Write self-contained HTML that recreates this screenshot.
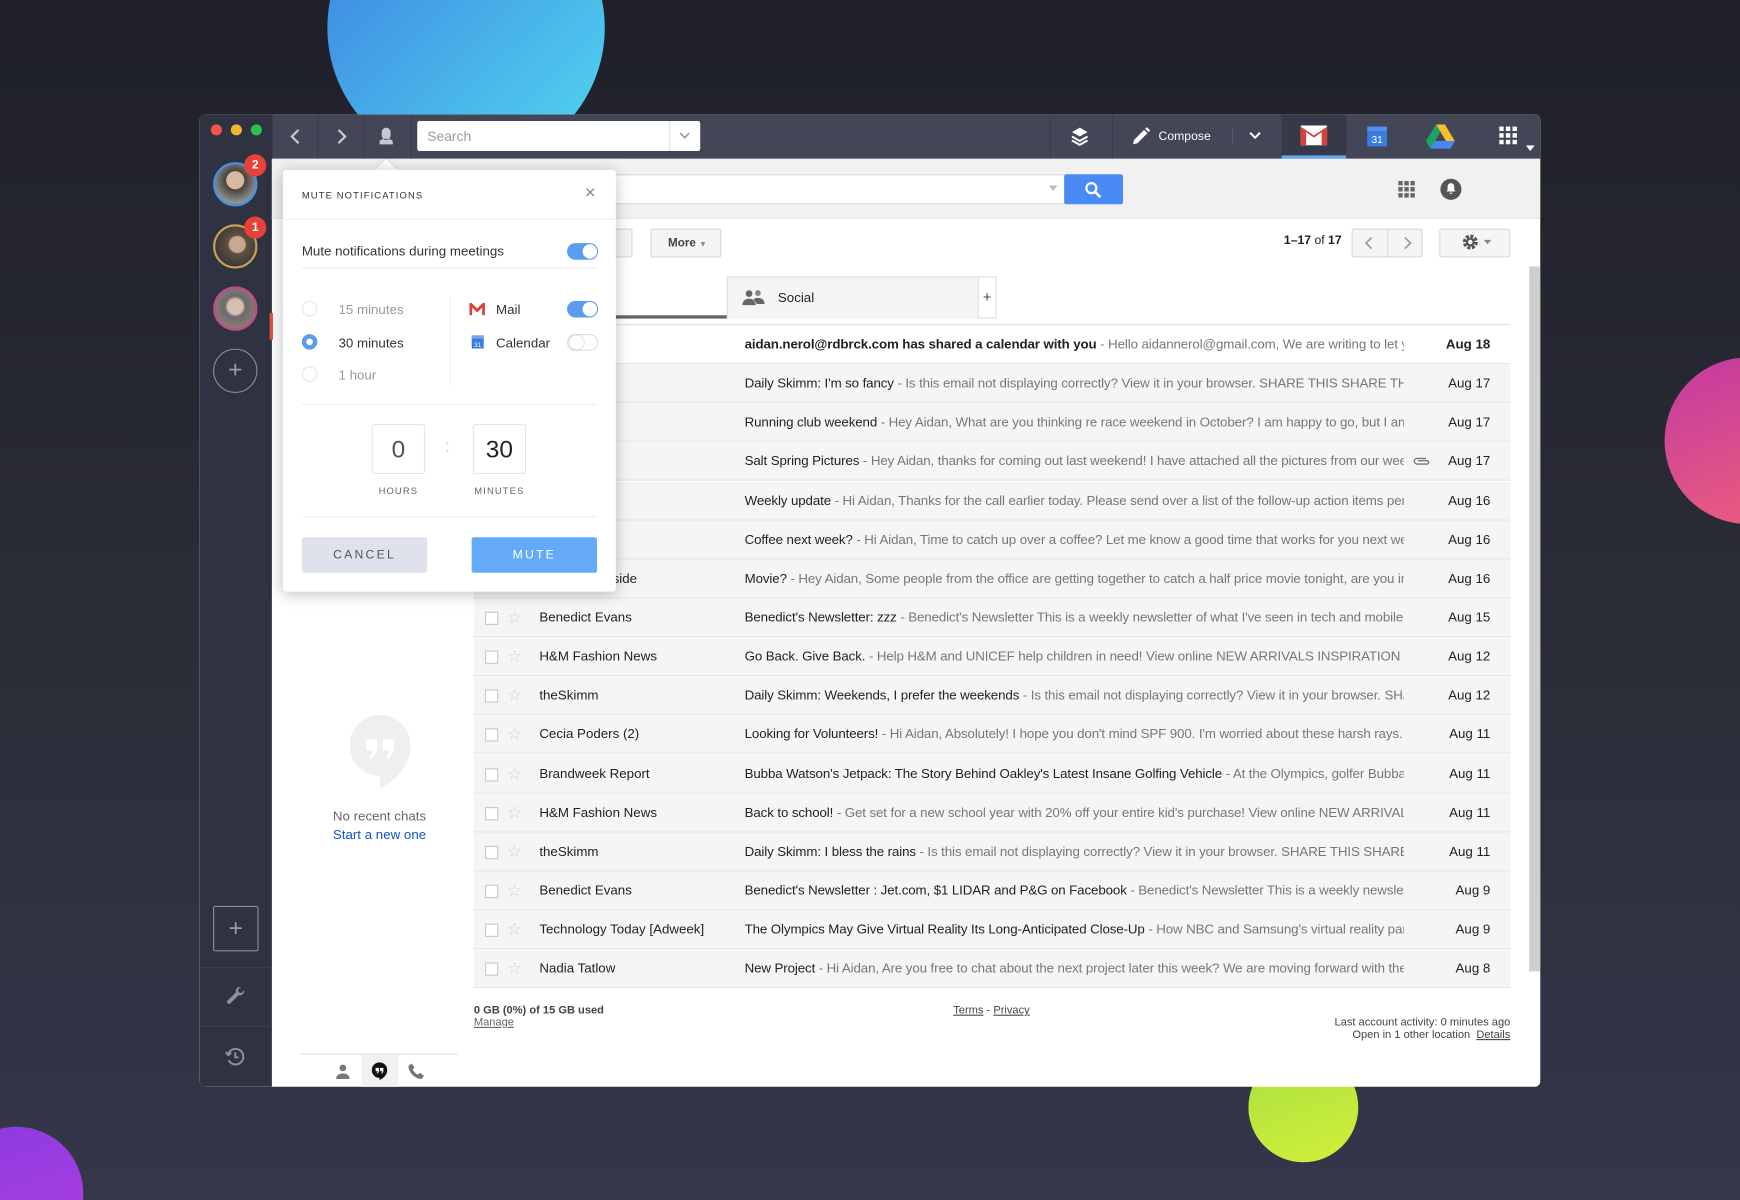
<!DOCTYPE html>
<html><head><meta charset="utf-8">
<style>
*{box-sizing:border-box;margin:0;padding:0}
html,body{width:1740px;height:1200px;overflow:hidden;background:#262833}
#s{position:absolute;left:0;top:0;width:1568px;height:1081px;transform:scale(1.1097,1.1101);transform-origin:0 0;font-family:"Liberation Sans",Arial,sans-serif;background:linear-gradient(180deg,#1f2029 0%,#2c2e3a 60%,#34374a 100%);overflow:hidden}
.a{position:absolute}
.circ{position:absolute;border-radius:50%}
.win{left:180px;top:103px;width:1208px;height:876px;background:#fff;border-radius:5px;overflow:hidden}
.tb{left:0;top:0;width:1208px;height:40px;background:#434656}
.side{left:0;top:0;width:65px;height:876px;background:#2f3240}
.sep{position:absolute;width:1px;background:#3a3d4c}
.row{position:absolute;left:427px;width:934px;height:35px;border-bottom:1px solid #e5e5e5;background:#f5f5f5;font-size:12px;color:#222}
.row .cb{position:absolute;left:10px;top:12px;width:12px;height:12px;border:1px solid #c8c8c8;background:#fff}
.row .st{position:absolute;left:30px;top:8px;color:#cfcfcf;font-size:15px}
.row .sn{position:absolute;left:59px;top:10px;white-space:nowrap}
.row .sb{position:absolute;left:244px;top:10px;width:594px;overflow:hidden;white-space:nowrap;letter-spacing:-0.1px}
.row .sb span{color:#777}
.row .dt{position:absolute;right:0;top:10px;width:80px;text-align:right;padding-right:18px}
.pop{left:255px;top:153px;width:300px;height:380px;background:#fff;border-radius:3px;box-shadow:0 2px 14px rgba(0,0,0,.25);font-family:"Liberation Sans",sans-serif}
.hr{position:absolute;height:1px;background:#eceef2}
.tog{position:absolute;width:28px;height:15px;border-radius:8px;background:#5b9cf0}
.tog:after{content:"";position:absolute;right:1px;top:1px;width:13px;height:13px;border-radius:50%;background:#fff}
.tog.off{background:#fff;border:1px solid #dcdde2}
.tog.off:after{left:1px;top:0;box-shadow:0 0 2px rgba(0,0,0,.3)}
.rad{position:absolute;left:17px;width:14px;height:14px;border-radius:50%;border:1px solid #e2e4ea}
.btn{position:absolute;height:26px;border:1px solid #d8d8d8;background:#f5f5f5;border-radius:2px;font-size:10.5px;font-weight:bold;color:#444;white-space:nowrap}
</style></head><body><div id="s">
<div class="circ" style="left:295px;top:-100px;width:250px;height:250px;background:linear-gradient(135deg,#3b7fe0,#52d8f0)"></div>
<div class="circ" style="left:1500px;top:322px;width:150px;height:150px;background:linear-gradient(160deg,#c23aa0,#f0607a)"></div>
<div class="circ" style="left:1125px;top:948px;width:99px;height:99px;background:linear-gradient(160deg,#a8e040,#d2f03a)"></div>
<div class="circ" style="left:-45px;top:1015px;width:120px;height:120px;background:linear-gradient(160deg,#8a3ae0,#b040e0)"></div>

<div class="a win">
 <div class="a tb"></div>
 <div class="a side"></div>
 <div class="circ" style="left:10px;top:9px;width:10px;height:10px;background:#f2544e"></div>
 <div class="circ" style="left:28px;top:9px;width:10px;height:10px;background:#f4b52a"></div>
 <div class="circ" style="left:46px;top:9px;width:10px;height:10px;background:#2cc14a"></div>
 <div class="circ" style="left:12px;top:43px;width:40px;height:40px;border:2px solid #4a90e2;background:radial-gradient(circle at 50% 40%,#d8b8a0 0 28%,#4a4038 30%,#8a9090 70%)"></div>
 <div class="circ" style="left:40px;top:36px;width:20px;height:20px;background:#e8413a;color:#fff;font-size:11px;font-weight:bold;text-align:center;line-height:20px">2</div>
 <div class="circ" style="left:12px;top:99px;width:40px;height:40px;border:2px solid #c9a050;background:radial-gradient(circle at 55% 45%,#c8a890 0 25%,#605040 30%,#3a3a3a 70%)"></div>
 <div class="circ" style="left:40px;top:92px;width:20px;height:20px;background:#e8413a;color:#fff;font-size:11px;font-weight:bold;text-align:center;line-height:20px">1</div>
 <div class="circ" style="left:12px;top:155px;width:40px;height:40px;border:2px solid #c04a90;background:radial-gradient(circle at 50% 45%,#d8c0b0 0 25%,#6a6a70 35%,#8a7a70 70%)"></div>
 <div class="a" style="left:63px;top:179px;width:3px;height:24px;background:#e8513a"></div>
 <div class="circ" style="left:12px;top:211px;width:40px;height:40px;border:1.5px solid #8a8d9a;color:#9a9da8;font-size:22px;text-align:center;line-height:36px;font-weight:300">+</div>
 <div class="a" style="left:12px;top:713px;width:41px;height:41px;border:1.5px solid #8a8d9a;border-radius:2px;color:#9a9da8;font-size:22px;text-align:center;line-height:38px">+</div>
 <div class="a" style="left:0;top:768px;width:65px;height:1px;background:#3b3e4d"></div>
 <div class="a" style="left:0;top:821px;width:65px;height:1px;background:#3b3e4d"></div>
 <svg class="a" style="left:22px;top:784px" width="20" height="20" viewBox="0 0 20 20"><path d="M15 2a4 4 0 0 0-4.5 5L3 14.5a1.8 1.8 0 0 0 2.5 2.5L13 9.5A4 4 0 0 0 18 5l-2.5 2.5L13 7l-.5-2.5z" fill="#8e919c"/></svg>
 <svg class="a" style="left:22px;top:839px" width="20" height="20" viewBox="0 0 20 20" fill="none" stroke="#8e919c" stroke-width="1.8"><path d="M3.5 8A7 7 0 1 1 4 13"/><path d="M1.5 5.5 3.5 8.5 6.5 6.5"/><path d="M10 6v4.5h3"/></svg>

 <div class="sep" style="left:65px;top:0;height:40px;background:#3a3d4c"></div>
 <div class="sep" style="left:106px;top:0;height:40px"></div>
 <div class="sep" style="left:148px;top:0;height:40px"></div>
 <div class="sep" style="left:190px;top:0;height:40px"></div>
 <svg class="a" style="left:80px;top:12px" width="12" height="16"><path d="M9 2 3 8l6 6" stroke="#c5c8d2" stroke-width="2" fill="none"/></svg>
 <svg class="a" style="left:122px;top:12px" width="12" height="16"><path d="M3 2l6 6-6 6" stroke="#c5c8d2" stroke-width="2" fill="none"/></svg>
 <svg class="a" style="left:161px;top:11px" width="14" height="17" viewBox="0 0 14 17"><path d="M7 1a4 4 0 0 0-4 4v3a4 4 0 0 0 8 0V5a4 4 0 0 0-4-4zM1 14c0-2 3-3 6-3s6 1 6 3v2H1z" fill="#c5c8d2"/></svg>
 <div class="a" style="left:196px;top:6px;width:255px;height:27px;background:#fff;border-radius:2px;font-size:12.5px;color:#9a9a9a;padding:7px 9px">Search</div>
 <div class="a" style="left:423px;top:6px;width:1px;height:27px;background:#e5e5e5"></div>
 <svg class="a" style="left:431px;top:14px" width="12" height="10"><path d="M2 3l4 4 4-4" stroke="#999" stroke-width="1.5" fill="none"/></svg>

 <div class="sep" style="left:766px;top:0;height:40px"></div>
 <div class="sep" style="left:822px;top:0;height:40px"></div>
 <div class="sep" style="left:975px;top:0;height:40px"></div>
 <svg class="a" style="left:784px;top:11px" width="18" height="18" viewBox="0 0 18 18"><path d="M9 1 2 5l7 4 7-4z" fill="#fff"/><path d="M2 9l7 4 7-4M2 12.5l7 4 7-4" stroke="#fff" stroke-width="1.8" fill="none"/></svg>
 <svg class="a" style="left:839px;top:11px" width="18" height="18" viewBox="0 0 18 18"><path d="M2 16l1-4L12 3l3 3-9 9z M13 2l1.5-1.5 3 3L16 5z" fill="#fff"/></svg>
 <div class="a" style="left:864px;top:14px;color:#fff;font-size:11px">Compose</div>
 <div class="sep" style="left:930px;top:12px;height:16px;background:#555868"></div>
 <svg class="a" style="left:945px;top:14px" width="12" height="10"><path d="M1.5 2.5 6 7l4.5-4.5" stroke="#fff" stroke-width="1.8" fill="none"/></svg>
 <div class="a" style="left:975px;top:0;width:58px;height:40px;background:#363947"></div>
 <div class="a" style="left:975px;top:37px;width:58px;height:3px;background:#64a8f4"></div>
 <svg class="a" style="left:992px;top:10px" width="24" height="18" viewBox="0 0 24 18"><rect x="0" y="0" width="24" height="18" rx="1" fill="#fff"/><path d="M0 1v17h5V6l7 5 7-5v12h5V1L12 9z" fill="#d8403a"/></svg>
 <svg class="a" style="left:1052px;top:9px" width="18" height="20" viewBox="0 0 18 20"><rect x="0" y="2" width="18" height="18" fill="#3b7ce0"/><rect x="0" y="2" width="18" height="4" fill="#5590e8"/><text x="9" y="17" font-size="9" fill="#fff" text-anchor="middle" font-family="Liberation Sans">31</text></svg>
 <svg class="a" style="left:1105px;top:9px" width="26" height="22" viewBox="0 0 26 22"><path d="M9 0h8l9 15h-8z" fill="#f6c02c"/><path d="M9 0 0 15l4 7 9-15z" fill="#1ea362"/><path d="M4 22h18l4-7H8z" fill="#4688f4"/></svg>
 <svg class="a" style="left:1171px;top:11px" width="16" height="16"><g fill="#fff"><rect x="0" y="0" width="4" height="4"/><rect x="6" y="0" width="4" height="4"/><rect x="12" y="0" width="4" height="4"/><rect x="0" y="6" width="4" height="4"/><rect x="6" y="6" width="4" height="4"/><rect x="12" y="6" width="4" height="4"/><rect x="0" y="12" width="4" height="4"/><rect x="6" y="12" width="4" height="4"/><rect x="12" y="12" width="4" height="4"/></g></svg>
 <svg class="a" style="left:1195px;top:28px" width="8" height="6"><path d="M0 0h8L4 5z" fill="#fff"/></svg>

 <div class="a" style="left:65px;top:40px;width:1143px;height:54px;background:#f1f1f1;border-bottom:1px solid #e2e2e2"></div>
 <div class="a" style="left:300px;top:54px;width:480px;height:27px;background:#fff;border:1px solid #d9d9d9"></div>
 <svg class="a" style="left:765px;top:64px" width="8" height="6"><path d="M0 0h8L4 5z" fill="#bbb"/></svg>
 <div class="a" style="left:779px;top:54px;width:53px;height:27px;background:#4a8af4;border-radius:2px"></div>
 <svg class="a" style="left:797px;top:60px" width="16" height="16" viewBox="0 0 16 16"><circle cx="6.5" cy="6.5" r="4.5" stroke="#fff" stroke-width="2" fill="none"/><path d="M10 10l4.5 4.5" stroke="#fff" stroke-width="2.4"/></svg>
 <svg class="a" style="left:1080px;top:60px" width="15" height="15"><g fill="#666"><rect x="0" y="0" width="4" height="4"/><rect x="5.5" y="0" width="4" height="4"/><rect x="11" y="0" width="4" height="4"/><rect x="0" y="5.5" width="4" height="4"/><rect x="5.5" y="5.5" width="4" height="4"/><rect x="11" y="5.5" width="4" height="4"/><rect x="0" y="11" width="4" height="4"/><rect x="5.5" y="11" width="4" height="4"/><rect x="11" y="11" width="4" height="4"/></g></svg>
 <div class="circ" style="left:1118px;top:58px;width:19px;height:19px;background:#555"></div>
 <svg class="a" style="left:1122px;top:61px" width="11" height="12" viewBox="0 0 11 12"><path d="M5.5 1A3 3 0 0 0 2.5 4v3L1.5 8.5h8L8.5 7V4a3 3 0 0 0-3-3zM4.3 9.5h2.4a1.2 1.2 0 0 1-2.4 0z" fill="#fff"/></svg>

 <div class="btn" style="left:350px;top:103px;width:40px"></div>
 <div class="btn" style="left:406px;top:103px;width:64px;padding:6px 15px">More <span style="font-size:7px;color:#888">▼</span></div>
 <div class="a" style="left:977px;top:108px;font-size:11px;font-weight:bold;color:#222">1–17 <span style="font-weight:normal">of</span> 17</div>
 <div class="btn" style="left:1038px;top:103px;width:64px"></div>
 <div class="a" style="left:1070px;top:103px;width:1px;height:26px;background:#ddd"></div>
 <svg class="a" style="left:1049px;top:109px" width="10" height="14"><path d="M7 2 2 7l5 5" stroke="#999" stroke-width="1.5" fill="none"/></svg>
 <svg class="a" style="left:1083px;top:109px" width="10" height="14"><path d="M3 2l5 5-5 5" stroke="#999" stroke-width="1.5" fill="none"/></svg>
 <div class="btn" style="left:1117px;top:103px;width:64px"></div>
 <svg class="a" style="left:1136px;top:106px" width="18" height="18" viewBox="0 0 18 18"><circle cx="9" cy="9" r="5" stroke="#555" stroke-width="3.5" fill="none" stroke-dasharray="2.6 1.3"/><circle cx="9" cy="9" r="4" fill="#555"/><circle cx="9" cy="9" r="2" fill="#f5f5f5"/></svg>
 <svg class="a" style="left:1157px;top:113px" width="7" height="5"><path d="M0 0h7L3.5 4z" fill="#888"/></svg>
 <div class="a" style="left:1198px;top:137px;width:10px;height:635px;background:#cfcfcf"></div>
</div>

<div class="a" style="left:427px;top:248px;width:228px;height:39px;border-bottom:3px solid #666;background:#fff"></div>
<div class="a" style="left:655px;top:249px;width:227px;height:38px;background:#f5f5f5;border:1px solid #ddd;border-bottom:none"></div>
<svg class="a" style="left:669px;top:261px" width="20" height="14" viewBox="0 0 20 14"><circle cx="6" cy="3.5" r="3" fill="#666"/><circle cx="14" cy="3" r="2.6" fill="#888"/><path d="M0 14c0-4 3-6 6-6s6 2 6 6zM10 8.5c1-1 2.5-1.2 4-1.2 3 0 6 1.5 6 5.5h-7z" fill="#666"/></svg>
<div class="a" style="left:701px;top:261px;font-size:12px;color:#222">Social</div>
<div class="a" style="left:882px;top:249px;width:16px;height:38px;border:1px solid #ddd;border-left:none;font-size:13px;text-align:center;line-height:36px;color:#444">+</div>
<div class="a" style="left:427px;top:292px;width:934px;height:1px;background:#ddd"></div>

<div class="row" style="top:293px;background:#fff;font-weight:bold"><div class="cb"></div><div class="st">☆</div><div class="sn">Google</div><div class="sb">aidan.nerol@rdbrck.com has shared a calendar with you <span style="font-weight:normal">- Hello aidannerol@gmail.com, We are writing to let you know</span></div><div class="dt">Aug 18</div></div>
<div class="row" style="top:328px"><div class="cb"></div><div class="st">☆</div><div class="sn">theSkimm</div><div class="sb">Daily Skimm: I'm so fancy <span>- Is this email not displaying correctly? View it in your browser. SHARE THIS SHARE THIS</span></div><div class="dt">Aug 17</div></div>
<div class="row" style="top:363px"><div class="cb"></div><div class="st">☆</div><div class="sn">Dan Forbes</div><div class="sb">Running club weekend <span>- Hey Aidan, What are you thinking re race weekend in October? I am happy to go, but I am not</span></div><div class="dt">Aug 17</div></div>
<div class="row" style="top:398px"><div class="cb"></div><div class="st">☆</div><div class="sn">Poders, Matt</div><div class="sb">Salt Spring Pictures <span>- Hey Aidan, thanks for coming out last weekend! I have attached all the pictures from our weekend</span></div><svg style="position:absolute;left:846px;top:13px" width="16" height="9" viewBox="0 0 16 9"><path d="M12 2H4a2.5 2.5 0 0 0 0 5h9a1.5 1.5 0 0 0 0-3H5" stroke="#777" stroke-width="1.2" fill="none"/></svg><div class="dt">Aug 17</div></div>
<div class="row" style="top:434px"><div class="cb"></div><div class="st">☆</div><div class="sn">Nadia</div><div class="sb">Weekly update <span>- Hi Aidan, Thanks for the call earlier today. Please send over a list of the follow-up action items per discussion</span></div><div class="dt">Aug 16</div></div>
<div class="row" style="top:469px"><div class="cb"></div><div class="st">☆</div><div class="sn">Mark Smith</div><div class="sb">Coffee next week? <span>- Hi Aidan, Time to catch up over a coffee? Let me know a good time that works for you next week</span></div><div class="dt">Aug 16</div></div>
<div class="row" style="top:504px"><div class="cb"></div><div class="st">☆</div><div class="sn">Sarah Whiteside</div><div class="sb">Movie? <span>- Hey Aidan, Some people from the office are getting together to catch a half price movie tonight, are you interested</span></div><div class="dt">Aug 16</div></div>
<div class="row" style="top:539px"><div class="cb"></div><div class="st">☆</div><div class="sn">Benedict Evans</div><div class="sb">Benedict's Newsletter: zzz <span>- Benedict's Newsletter This is a weekly newsletter of what I've seen in tech and mobile and</span></div><div class="dt">Aug 15</div></div>
<div class="row" style="top:574px"><div class="cb"></div><div class="st">☆</div><div class="sn">H&amp;M Fashion News</div><div class="sb">Go Back. Give Back. <span>- Help H&amp;M and UNICEF help children in need! View online NEW ARRIVALS INSPIRATION STORE</span></div><div class="dt">Aug 12</div></div>
<div class="row" style="top:609px"><div class="cb"></div><div class="st">☆</div><div class="sn">theSkimm</div><div class="sb">Daily Skimm: Weekends, I prefer the weekends <span>- Is this email not displaying correctly? View it in your browser. SHARE</span></div><div class="dt">Aug 12</div></div>
<div class="row" style="top:644px"><div class="cb"></div><div class="st">☆</div><div class="sn">Cecia Poders (2)</div><div class="sb">Looking for Volunteers! <span>- Hi Aidan, Absolutely! I hope you don't mind SPF 900. I'm worried about these harsh rays. And</span></div><div class="dt">Aug 11</div></div>
<div class="row" style="top:680px"><div class="cb"></div><div class="st">☆</div><div class="sn">Brandweek Report</div><div class="sb">Bubba Watson's Jetpack: The Story Behind Oakley's Latest Insane Golfing Vehicle <span>- At the Olympics, golfer Bubba Watson</span></div><div class="dt">Aug 11</div></div>
<div class="row" style="top:715px"><div class="cb"></div><div class="st">☆</div><div class="sn">H&amp;M Fashion News</div><div class="sb">Back to school! <span>- Get set for a new school year with 20% off your entire kid's purchase! View online NEW ARRIVALS</span></div><div class="dt">Aug 11</div></div>
<div class="row" style="top:750px"><div class="cb"></div><div class="st">☆</div><div class="sn">theSkimm</div><div class="sb">Daily Skimm: I bless the rains <span>- Is this email not displaying correctly? View it in your browser. SHARE THIS SHARE THIS</span></div><div class="dt">Aug 11</div></div>
<div class="row" style="top:785px"><div class="cb"></div><div class="st">☆</div><div class="sn">Benedict Evans</div><div class="sb">Benedict's Newsletter : Jet.com, $1 LIDAR and P&amp;G on Facebook <span>- Benedict's Newsletter This is a weekly newsletter</span></div><div class="dt">Aug 9</div></div>
<div class="row" style="top:820px"><div class="cb"></div><div class="st">☆</div><div class="sn">Technology Today [Adweek]</div><div class="sb">The Olympics May Give Virtual Reality Its Long-Anticipated Close-Up <span>- How NBC and Samsung's virtual reality partnership</span></div><div class="dt">Aug 9</div></div>
<div class="row" style="top:855px"><div class="cb"></div><div class="st">☆</div><div class="sn">Nadia Tatlow</div><div class="sb">New Project <span>- Hi Aidan, Are you free to chat about the next project later this week? We are moving forward with the green</span></div><div class="dt">Aug 8</div></div>

<div class="a" style="left:427px;top:905px;font-size:10px;color:#444;font-weight:bold;line-height:11px">0 GB (0%) of 15 GB used<br><span style="font-weight:normal;text-decoration:underline;color:#666">Manage</span></div>
<div class="a" style="left:859px;top:905px;font-size:10px;color:#444"><u>Terms</u> - <u>Privacy</u></div>
<div class="a" style="left:1100px;top:916px;width:261px;text-align:right;font-size:10px;color:#444;line-height:11px">Last account activity: 0 minutes ago<br>Open in 1 other location &nbsp;<u>Details</u></div>

<svg class="a" style="left:315px;top:644px" width="55" height="66" viewBox="0 0 55 66"><path d="M27.5 0A27.5 27.5 0 0 0 0 27.5 27.5 27.5 0 0 0 27.5 55V66C44 58 55 44 55 27.5A27.5 27.5 0 0 0 27.5 0z" fill="#efefef"/><path d="M15 22h10v10l-4 7h-3l3-7h-6zM30 22h10v10l-4 7h-3l3-7h-6z" fill="#fff"/></svg>
<div class="a" style="left:271px;top:728px;width:142px;text-align:center;font-size:12px;color:#666">No recent chats</div>
<div class="a" style="left:271px;top:745px;width:142px;text-align:center;font-size:12px;color:#1155cc">Start a new one</div>
<div class="a" style="left:271px;top:949px;width:142px;height:1px;background:#e0e0e0"></div>
<div class="a" style="left:326px;top:950px;width:33px;height:29px;background:#f1f1f1"></div>
<svg class="a" style="left:302px;top:958px" width="14" height="14" viewBox="0 0 14 14"><circle cx="7" cy="4" r="3" fill="#777"/><path d="M1 14c0-4 3-5 6-5s6 1 6 5z" fill="#777"/></svg>
<svg class="a" style="left:335px;top:957px" width="14" height="16" viewBox="0 0 14 16"><path d="M7 0a7 7 0 0 0 0 14v2c4-2 7-5 7-9A7 7 0 0 0 7 0z" fill="#111"/><path d="M3.5 5h3v3l-1 2h-1l1-2h-2zM7.5 5h3v3l-1 2h-1l1-2h-2z" fill="#fff"/></svg>
<svg class="a" style="left:368px;top:958px" width="14" height="14" viewBox="0 0 14 14"><path d="M3 0l2.5 3.5-1.5 2c1 2 2.5 3.5 4.5 4.5l2-1.5L14 11l-2 3C6 14 0 8 0 2z" fill="#777"/></svg>

<div class="a" style="left:341px;top:146px;width:14px;height:14px;background:#fff;transform:rotate(45deg);box-shadow:-1px -1px 2px rgba(0,0,0,.08)"></div>
<div class="a pop">
 <div class="a" style="left:17px;top:18px;font-size:8.5px;letter-spacing:1px;color:#333">MUTE NOTIFICATIONS</div>
 <div class="a" style="left:272px;top:11px;font-size:17px;color:#888;font-weight:300">×</div>
 <div class="hr" style="left:0;top:44px;width:300px"></div>
 <div class="a" style="left:17px;top:66px;font-size:12px;color:#333">Mute notifications during meetings</div>
 <div class="tog" style="left:256px;top:66px"></div>
 <div class="hr" style="left:17px;top:88px;width:266px"></div>
 <div class="rad" style="top:118px"></div>
 <div class="rad" style="top:148px;border:4px solid #5b9cf0"></div>
 <div class="rad" style="top:177px"></div>
 <div class="a" style="left:50px;top:119px;font-size:12px;color:#999">15 minutes</div>
 <div class="a" style="left:50px;top:149px;font-size:12px;color:#333">30 minutes</div>
 <div class="a" style="left:50px;top:178px;font-size:12px;color:#999">1 hour</div>
 <div class="a" style="left:150px;top:115px;width:1px;height:80px;background:#eceef2"></div>
 <svg class="a" style="left:168px;top:120px" width="14" height="11" viewBox="0 0 14 11"><path d="M0 0h2l5 5 5-5h2v11h-2.5V4L7 8.5 2.5 4v7H0z" fill="#d8403a"/></svg>
 <div class="a" style="left:192px;top:119px;font-size:12px;color:#333">Mail</div>
 <div class="tog" style="left:256px;top:118px"></div>
 <svg class="a" style="left:170px;top:149px" width="11" height="12"><rect width="11" height="12" fill="#3b7ce0"/><rect y="0" width="11" height="3" fill="#7aa8ee"/><text x="5.5" y="10.5" font-size="6" fill="#fff" text-anchor="middle" font-family="Liberation Sans">31</text></svg>
 <div class="a" style="left:192px;top:149px;font-size:12px;color:#333">Calendar</div>
 <div class="tog off" style="left:256px;top:148px"></div>
 <div class="hr" style="left:17px;top:211px;width:266px"></div>
 <div class="a" style="left:80px;top:229px;width:48px;height:45px;border:1px solid #e5e6ea;border-radius:2px;text-align:center;line-height:43px;font-size:22px;color:#555">0</div>
 <div class="a" style="left:146px;top:241px;font-size:16px;color:#ccc">:</div>
 <div class="a" style="left:171px;top:229px;width:48px;height:45px;border:1px solid #e5e6ea;border-radius:2px;text-align:center;line-height:43px;font-size:22px;color:#222">30</div>
 <div class="a" style="left:80px;top:284px;width:48px;text-align:center;font-size:8.5px;letter-spacing:1px;color:#666">HOURS</div>
 <div class="a" style="left:165px;top:284px;width:60px;text-align:center;font-size:8.5px;letter-spacing:1px;color:#666">MINUTES</div>
 <div class="hr" style="left:17px;top:312px;width:266px"></div>
 <div class="a" style="left:17px;top:331px;width:113px;height:32px;background:#dfe2ec;border-radius:2px;text-align:center;line-height:32px;font-size:11px;letter-spacing:2px;color:#555">CANCEL</div>
 <div class="a" style="left:170px;top:331px;width:113px;height:32px;background:#64aaf8;border-radius:2px;text-align:center;line-height:32px;font-size:11px;letter-spacing:2px;color:#fff">MUTE</div>
</div>
</div></body></html>
